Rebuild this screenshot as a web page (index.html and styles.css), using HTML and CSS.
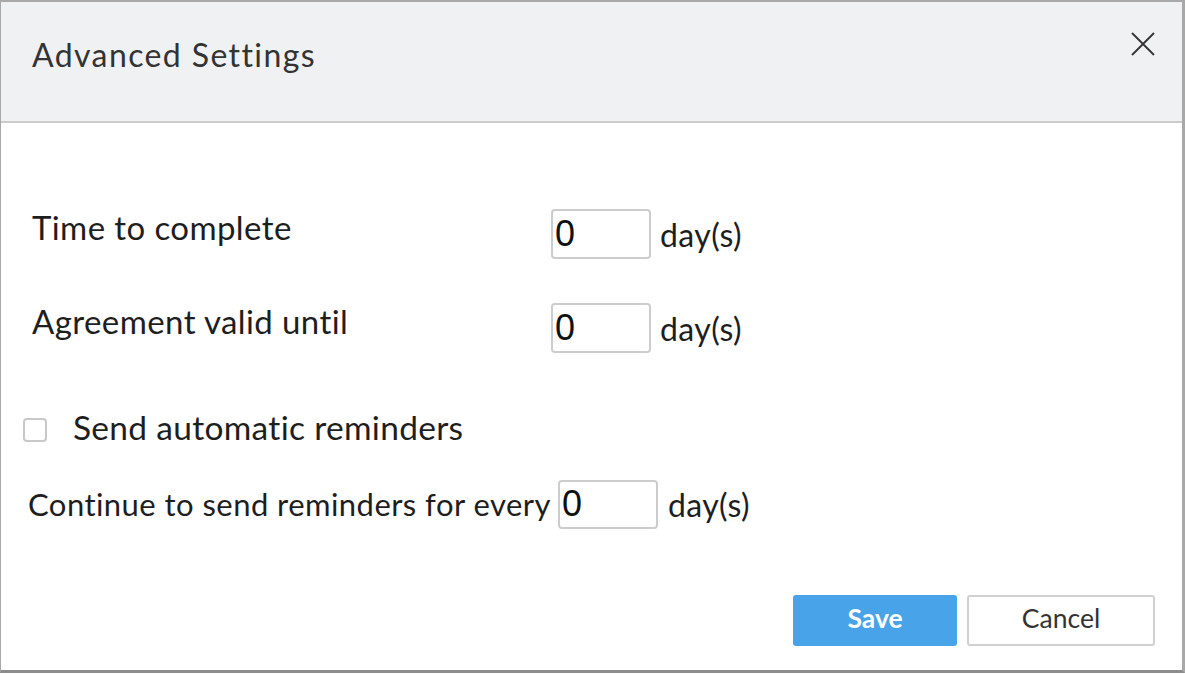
FILE: index.html
```html
<!DOCTYPE html>
<html>
<head>
<meta charset="utf-8">
<link rel="stylesheet" href="styles.css">
</head>
<body>
<div class="dialog">
  <div class="header">
    <h1 class="title">Advanced Settings</h1>
    <button class="close" aria-label="Close">
      <svg width="24" height="24" viewBox="0 0 24 24"><path d="M1 1 L23 23 M23 1 L1 23" stroke="#333" stroke-width="1.8" fill="none"/></svg>
    </button>
  </div>
  <div class="body">
    <div class="row row-first">
      <label class="label">Time to complete</label>
      <input class="num" type="text" value="0">
      <span class="unit">day(s)</span>
    </div>
    <div class="row row-second">
      <label class="label">Agreement valid until</label>
      <input class="num" type="text" value="0">
      <span class="unit">day(s)</span>
    </div>
    <div class="check-row">
      <span class="checkbox"></span>
      <span class="check-label">Send automatic reminders</span>
    </div>
    <div class="every-row">
      <span class="every-label">Continue to send reminders for every</span>
      <input class="num num-every" type="text" value="0">
      <span class="unit unit-every">day(s)</span>
    </div>
  </div>
  <div class="footer">
    <button class="btn btn-save">Save</button>
    <button class="btn btn-cancel">Cancel</button>
  </div>
</div>
</body>
</html>
```
FILE: styles.css
```css
html, body {
  margin: 0;
  padding: 0;
  background: #fff;
}
body {
  font-family: "Lato", "Liberation Sans", sans-serif;
  color: #1e1e1e;
}
.dialog {
  width: 1185px;
  height: 673px;
  box-sizing: border-box;
  border-top: 2px solid #a8a8a8;
  border-left: 1px solid #a8a8a8;
  border-right: 3px solid #a8a8a8;
  border-bottom: 3px solid #8c8c8c;
  display: flex;
  flex-direction: column;
  background: #fff;
}
.header {
  height: 119px;
  background: #f0f1f3;
  border-bottom: 2px solid #cbcbcb;
  display: flex;
  align-items: flex-start;
  justify-content: space-between;
  padding: 0 27px 0 31px;
  flex-shrink: 0;
}
.title {
  margin: 33px 0 0 0;
  font-weight: 400;
  font-size: 32px;
  line-height: 40px;
  letter-spacing: 1.4px;
  color: #333;
}
.close {
  border: 0;
  background: none;
  padding: 0;
  width: 24px;
  height: 24px;
  margin-top: 30px;
  display: block;
}
.close svg {
  display: block;
}
.body {
  flex: 1;
  padding: 86px 0 0 0;
}
.row {
  display: flex;
  align-items: center;
  height: 50px;
  padding-left: 31px;
}
.row-second {
  margin-top: 44px;
}
.label {
  width: 519px;
  font-size: 33px;
  letter-spacing: 0.4px;
  padding-bottom: 14px;
}
.num {
  box-sizing: border-box;
  width: 100px;
  height: 50px;
  border: 2px solid #cccccc;
  border-radius: 4px;
  font-family: "Liberation Sans", Arial, sans-serif;
  font-size: 36px;
  color: #111;
  padding: 0 2px;
  outline: none;
}
.unit {
  font-size: 32px;
  letter-spacing: 0.4px;
  margin-left: 9px;
}
.check-row {
  display: flex;
  align-items: center;
  margin-top: 57px;
  padding-left: 22px;
  height: 40px;
}
.checkbox {
  box-sizing: border-box;
  width: 24px;
  height: 24px;
  border: 2px solid #c8c8c8;
  border-radius: 4px;
  background: #fff;
}
.check-label {
  font-size: 33.5px;
  letter-spacing: 0.3px;
  margin-left: 26px;
  padding-bottom: 6px;
}
.every-row {
  display: flex;
  align-items: center;
  margin-top: 30px;
  padding-left: 27px;
  height: 48px;
}
.every-label {
  font-size: 31px;
  letter-spacing: 0.45px;
  margin-right: 7px;
}
.num-every {
  height: 49px;
}
.unit-every {
  margin-left: 10px;
}
.footer {
  display: flex;
  justify-content: flex-end;
  gap: 10px;
  padding: 0 27px 24px 0;
}
.btn {
  box-sizing: border-box;
  height: 51px;
  border-radius: 3px;
  font-family: "Lato", "Liberation Sans", sans-serif;
  font-size: 26.5px;
  line-height: 1;
  padding: 0 0 4px 0;
  cursor: pointer;
}
.btn-save {
  width: 164px;
  background: #48a3e8;
  border: 0;
  color: #fff;
  font-weight: 700;
}
.btn-cancel {
  width: 188px;
  background: #fff;
  border: 2px solid #d0d0d0;
  color: #333;
}
```
